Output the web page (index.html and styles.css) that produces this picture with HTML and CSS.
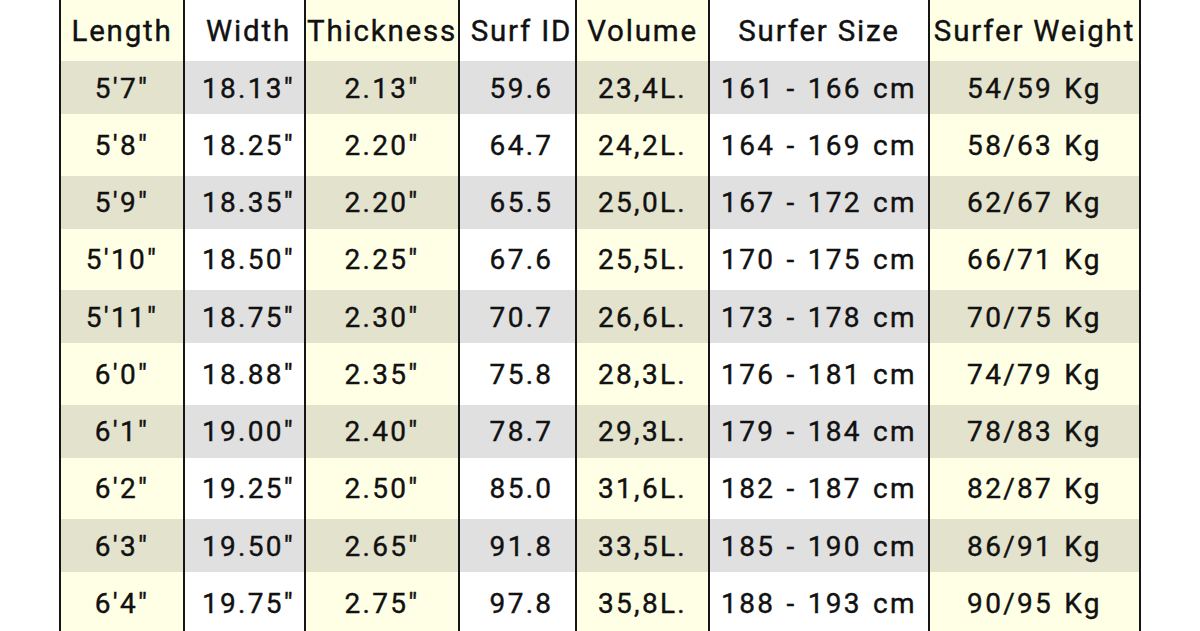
FILE: index.html
```html
<!DOCTYPE html>
<html lang="en">
<head>
<meta charset="utf-8">
<title>Surfboard Size Chart</title>
<link rel="stylesheet" href="styles.css">
</head>
<body>
<div class="chart">
  <div class="row head">
    <div class="cell y">Length</div><div class="cell">Width</div><div class="cell y">Thickness</div><div class="cell">Surf ID</div><div class="cell y">Volume</div><div class="cell">Surfer Size</div><div class="cell y">Surfer Weight</div>
  </div>
  <div class="row alt">
    <div class="cell y">5′7″</div><div class="cell">18.13″</div><div class="cell y">2.13″</div><div class="cell">59.6</div><div class="cell y">23,4L.</div><div class="cell">161 - 166 cm</div><div class="cell y">54/59 Kg</div>
  </div>
  <div class="row">
    <div class="cell y">5′8″</div><div class="cell">18.25″</div><div class="cell y">2.20″</div><div class="cell">64.7</div><div class="cell y">24,2L.</div><div class="cell">164 - 169 cm</div><div class="cell y">58/63 Kg</div>
  </div>
  <div class="row alt">
    <div class="cell y">5′9″</div><div class="cell">18.35″</div><div class="cell y">2.20″</div><div class="cell">65.5</div><div class="cell y">25,0L.</div><div class="cell">167 - 172 cm</div><div class="cell y">62/67 Kg</div>
  </div>
  <div class="row">
    <div class="cell y">5′10″</div><div class="cell">18.50″</div><div class="cell y">2.25″</div><div class="cell">67.6</div><div class="cell y">25,5L.</div><div class="cell">170 - 175 cm</div><div class="cell y">66/71 Kg</div>
  </div>
  <div class="row alt">
    <div class="cell y">5′11″</div><div class="cell">18.75″</div><div class="cell y">2.30″</div><div class="cell">70.7</div><div class="cell y">26,6L.</div><div class="cell">173 - 178 cm</div><div class="cell y">70/75 Kg</div>
  </div>
  <div class="row">
    <div class="cell y">6′0″</div><div class="cell">18.88″</div><div class="cell y">2.35″</div><div class="cell">75.8</div><div class="cell y">28,3L.</div><div class="cell">176 - 181 cm</div><div class="cell y">74/79 Kg</div>
  </div>
  <div class="row alt">
    <div class="cell y">6′1″</div><div class="cell">19.00″</div><div class="cell y">2.40″</div><div class="cell">78.7</div><div class="cell y">29,3L.</div><div class="cell">179 - 184 cm</div><div class="cell y">78/83 Kg</div>
  </div>
  <div class="row">
    <div class="cell y">6′2″</div><div class="cell">19.25″</div><div class="cell y">2.50″</div><div class="cell">85.0</div><div class="cell y">31,6L.</div><div class="cell">182 - 187 cm</div><div class="cell y">82/87 Kg</div>
  </div>
  <div class="row alt">
    <div class="cell y">6′3″</div><div class="cell">19.50″</div><div class="cell y">2.65″</div><div class="cell">91.8</div><div class="cell y">33,5L.</div><div class="cell">185 - 190 cm</div><div class="cell y">86/91 Kg</div>
  </div>
  <div class="row">
    <div class="cell y">6′4″</div><div class="cell">19.75″</div><div class="cell y">2.75″</div><div class="cell">97.8</div><div class="cell y">35,8L.</div><div class="cell">188 - 193 cm</div><div class="cell y">90/95 Kg</div>
  </div>
</div>
</body>
</html>
```

FILE: styles.css
```css
html {
  overflow: hidden;
}
body {
  margin: 0;
  background: #ffffff;
  font-family: Roboto, "Liberation Sans", sans-serif;
  color: #111111;
}
.chart {
  margin-left: 59px;
  width: 1082px;
}
.row {
  display: grid;
  grid-template-columns: 126px 121px 154px 117px 133px 220px 211px;
  height: 61.5px;
}
.row.head {
  height: 61px;
}
.row.alt {
  height: 53px;
}
.cell {
  box-sizing: border-box;
  display: flex;
  align-items: center;
  justify-content: center;
  border-right: 2px solid #151515;
  background: #ffffff;
  font-size: 28px;
  font-weight: 400;
  letter-spacing: 2.3px;
  word-spacing: 2px;
  white-space: nowrap;
  padding-top: 1px;
  -webkit-text-stroke: 0.4px #111111;
}
.cell:first-child {
  border-left: 2px solid #151515;
}
.cell:nth-child(2),
.cell:nth-child(4) {
  padding-left: 8px;
}
.cell.y {
  background: #ffffe6;
}
.alt .cell {
  background: #e1e0e1;
}
.alt .cell.y {
  background: #e3e2cd;
}
.head .cell {
  font-size: 29.5px;
  letter-spacing: 1.8px;
  word-spacing: 0;
  padding-top: 0;
}
```
